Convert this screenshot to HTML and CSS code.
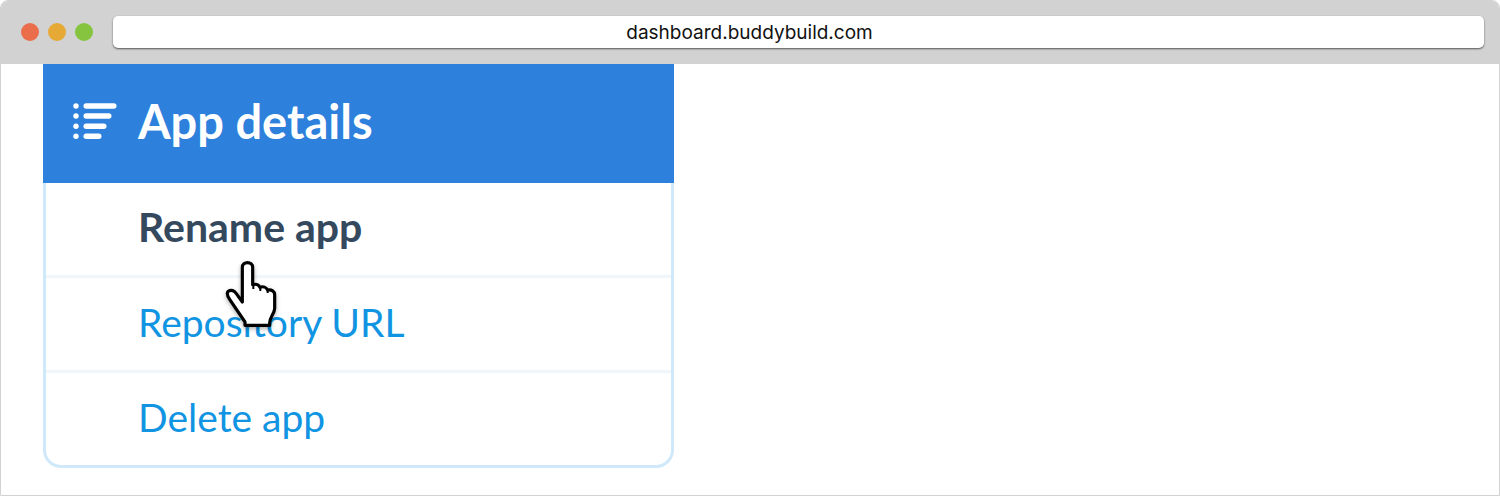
FILE: index.html
```html
<!DOCTYPE html>
<html lang="en">
<head>
<meta charset="utf-8">
<meta name="viewport" content="width=device-width, initial-scale=1">
<title>App details</title>
<link rel="stylesheet" href="styles.css">
</head>
<body>
<div class="browser">
  <header class="toolbar">
    <div class="lights">
      <span class="light light-close"></span>
      <span class="light light-minimize"></span>
      <span class="light light-zoom"></span>
    </div>
    <input class="address" type="text" value="dashboard.buddybuild.com" aria-label="Address">
  </header>
  <main class="page">
    <nav class="card" aria-labelledby="card-title">
      <div class="card-header">
        <svg class="list-icon" viewBox="0 0 44 36" aria-hidden="true">
          <g fill="#fff">
            <circle cx="3" cy="3" r="2.7"/><circle cx="3" cy="13" r="2.7"/><circle cx="3" cy="23.2" r="2.7"/><circle cx="3" cy="33.2" r="2.7"/>
            <rect x="10.500" y="0.300" width="33" height="5.400" rx="2.700"/>
            <rect x="10.500" y="10.300" width="28" height="5.400" rx="2.700"/>
            <rect x="10.500" y="20.500" width="23" height="5.400" rx="2.700"/>
            <rect x="10.500" y="30.500" width="18" height="5.400" rx="2.700"/>
          </g>
        </svg>
        <h1 class="card-title" id="card-title">App details</h1>
      </div>
      <ul class="menu">
        <li class="menu-item">
          <a class="menu-link menu-link-active" href="#rename">Rename app</a>
          <svg class="pointer" viewBox="30 30 156 204" aria-hidden="true">
            <path d="M82 156V52C82 33 113 33 113 52V104C123 101 131 104 135 112C144 108 154 112 158 120C170 118 179 124 179 134V175C179 190 164 202 164 218V226H90V216L44 148C38 139 34 129 40 124C48 118 59 122 64 131Z" fill="#fff" stroke="#000" stroke-width="9.500" stroke-linejoin="round"/>
            <path d="M115 103V117M136 111V123M158 119V129" fill="none" stroke="#000" stroke-width="6"/>
          </svg>
        </li>
        <li class="menu-item"><a class="menu-link" href="#repository">Repository URL</a></li>
        <li class="menu-item"><a class="menu-link" href="#delete">Delete app</a></li>
      </ul>
    </nav>
  </main>
</div>
</body>
</html>
```
FILE: styles.css
```css
* {
  box-sizing: border-box;
}

body {
  margin: 0;
  background: #fff;
  font-family: Lato, "Open Sans", sans-serif;
}

.browser {
  display: flex;
  flex-direction: column;
  min-height: 100vh;
  border: 1px solid #d2d2d2;
  border-radius: 8px 8px 0 0;
  overflow: hidden;
}

.toolbar {
  display: flex;
  align-items: center;
  gap: 20px;
  padding: 15px 15px 16px 20px;
  background: #d2d2d2;
}

.lights {
  display: flex;
  gap: 9px;
}

.light {
  width: 18px;
  height: 18px;
  border-radius: 50%;
}

.light-close {
  background: #ea6e4c;
}

.light-minimize {
  background: #e6a935;
}

.light-zoom {
  background: #86c440;
}

.address {
  flex: 1;
  min-width: 0;
  height: 32px;
  padding: 0 106px 0 8px;
  border: 0;
  border-radius: 5px;
  background: #fff;
  box-shadow: 0 1px 2px rgba(0, 0, 0, 0.6);
  color: #111;
  font: 19px Inter, Roboto, sans-serif;
  text-align: center;
}

.page {
  flex: 1;
  padding: 0 42px 24px;
}

.card {
  width: 631px;
  max-width: 100%;
}

.card-header {
  display: flex;
  align-items: center;
  gap: 21px;
  height: 119px;
  padding: 0 30px 5px;
  background: #2d80dc;
}

.list-icon {
  flex: none;
  width: 44px;
  height: 36px;
}

.card-title {
  margin: 0;
  color: #fff;
  font-size: 47px;
  font-weight: 700;
  line-height: 56px;
}

.menu {
  margin: 0;
  padding: 0;
  border: 3px solid #d0e9fa;
  border-top: 0;
  border-radius: 0 0 18px 18px;
  list-style: none;
}

.menu-item {
  position: relative;
}

.menu-item + .menu-item {
  border-top: 3px solid #eff6fc;
}

.menu-link {
  display: block;
  padding: 18px 24px 22px 92px;
  color: #1194e2;
  font-size: 39px;
  line-height: 52px;
  text-decoration: none;
}

.menu-link-active {
  color: #34495e;
  font-size: 41px;
  font-weight: 700;
}

.pointer {
  position: absolute;
  top: 77px;
  left: 179px;
  z-index: 1;
  width: 52px;
  height: 68px;
  overflow: visible;
  filter: drop-shadow(0 2px 2px rgba(0, 0, 0, 0.3));
  pointer-events: none;
}
```
